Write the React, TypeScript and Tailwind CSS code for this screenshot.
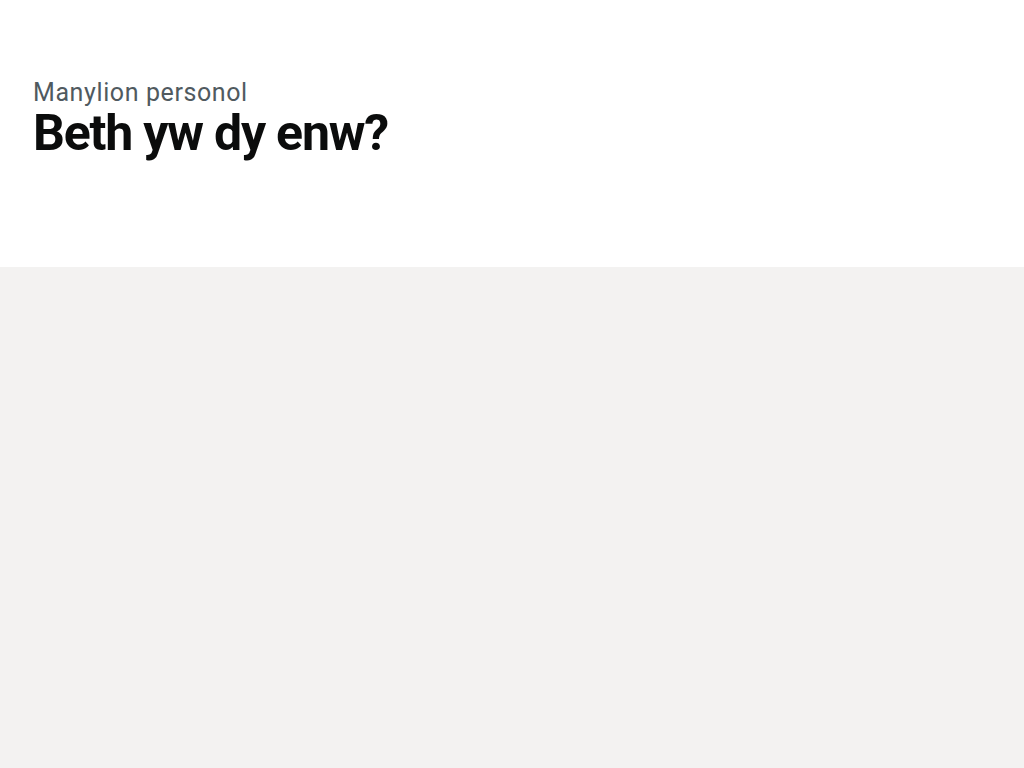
export default function App() {
  return (
    <div className="min-h-[768px] bg-[#f3f2f1]" style={{ fontFamily: "Roboto, Arial, sans-serif" }}>
      <div className="h-[267px] bg-white px-[33px] pt-[79px]">
        <span className="block text-[25px] leading-[28px] text-[#505a5f] tracking-[0.6px]">Manylion personol</span>
        <h1 className="text-[50px] leading-[52px] font-bold text-[#0b0c0c] tracking-[-1.2px]">Beth yw dy enw?</h1>
      </div>
    </div>
  );
}
